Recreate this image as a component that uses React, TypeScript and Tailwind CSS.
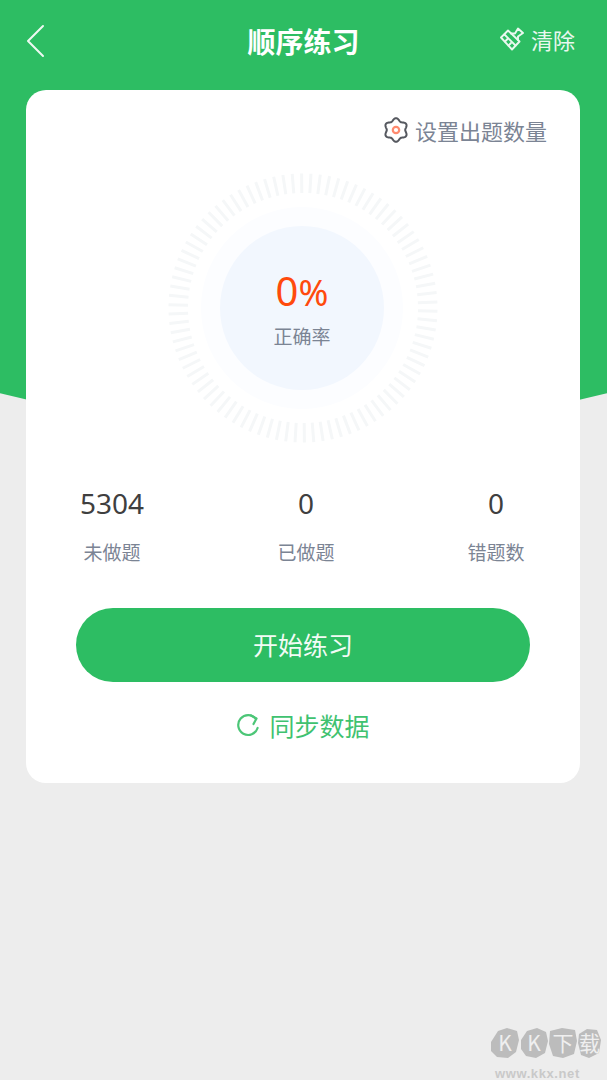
const F = "font-['Noto_Sans_CJK_SC','Noto_Sans',sans-serif]";
const LATIN = "font-['Noto_Sans','Noto_Sans_CJK_SC',sans-serif]";

function Ring() {
  const ticks = Array.from({ length: 90 }, (_, i) => i * 4 - 0.6);
  return (
    <svg width="272" height="272" viewBox="-136 -136 272 272" className="block">
      {ticks.map((a) => (
        <line key={a} x1="0" y1="-115" x2="0" y2="-134.5" stroke="#f5f7f8" strokeWidth="3" transform={`rotate(${a})`} />
      ))}
    </svg>
  );
}

function Brush() {
  return (
    <svg width="24" height="24" viewBox="0 0 24 24" fill="none" stroke="currentColor" strokeWidth="1.9" strokeLinejoin="round" strokeLinecap="round" className="block">
      <path d="M1 10.5 L8 3.5 L19.5 14.5 L12 22.5 Z" />
      <path d="M4.5 7.5 L15.5 18.5" />
      <path d="M5 14.5 L7.5 12 M8.5 18.5 L11 16" />
      <path d="M11 6.5 L15 6.5 L18 1.5 L23 6 L18 9.5 L18 13" />
    </svg>
  );
}

function gearPath() {
  const pts: string[] = [];
  for (let i = 0; i < 120; i++) {
    const t = (i / 120) * Math.PI * 2;
    const r = 10.5 - 1.3 * Math.cos(6 * t);
    pts.push(`${(12 + r * Math.cos(t)).toFixed(2)} ${(13 + r * Math.sin(t)).toFixed(2)}`);
  }
  return `M${pts.join(" L")} Z`;
}

function Gear() {
  return (
    <svg width="24" height="26" viewBox="0 0 24 26" fill="none" className="block">
      <path d={gearPath()} stroke="#55585f" strokeWidth="2" strokeLinejoin="round" />
      <circle cx="12" cy="13" r="3.2" stroke="#ff8a6e" strokeWidth="2.2" />
    </svg>
  );
}

function Sync() {
  return (
    <svg width="24" height="24" viewBox="0 0 24 24" fill="none" stroke="#4cc677" strokeWidth="2.2" strokeLinecap="round" strokeLinejoin="round" className="block translate-y-[1px]">
      <path d="M21.6 14 A9.9 9.9 0 1 1 20 5" />
      <path d="M15 1.5 L20.5 4.5 L17.5 10" />
    </svg>
  );
}

function Stat({ value, label, className }: { value: string; label: string; className?: string }) {
  return (
    <div className={`flex w-[70px] flex-col items-center ${className ?? ""}`}>
      <div className={`h-[40px] text-[28px] leading-[40px] text-[#3f3f3f] ${LATIN}`}>{value}</div>
      <div className="mt-[15px] text-[19px] leading-[28px] text-[#7b8494]">{label}</div>
    </div>
  );
}

function Watermark() {
  const blobs = [
    { d: "M1 14 L8 3 L17 0 L27 3 L29 12 L26 24 L18 30 L7 29 L1 23 Z", t: "K", x: 15 },
    { d: "M31 12 L37 3 L47 0 L56 4 L58 13 L55 25 L46 30 L36 28 L31 21 Z", t: "K", x: 44 },
    { d: "M60 3 L72 0 L85 2 L87 13 L84 26 L73 30 L63 28 L59 16 Z", t: "下", x: 73 },
    { d: "M89 6 L97 1 L107 2 L111 12 L109 25 L99 30 L91 27 L88 15 Z", t: "载", x: 99.5 },
  ];
  return (
    <div className="absolute left-[490px] top-[1028px] w-[113px]">
      <svg width="113" height="31" viewBox="0 0 113 31" className="block">
        {blobs.map((b) => (
          <g key={b.x}>
            <path d={b.d} fill="#bcbcbc" />
            <text x={b.x} y="23" textAnchor="middle" fontSize="21" fill="#efefef" fontFamily="'Noto Sans CJK SC',sans-serif">
              {b.t}
            </text>
          </g>
        ))}
      </svg>
      <div className="mt-[7px] pl-[5px] text-[13px] font-bold leading-[16px] tracking-[0.6px] text-[#c9c9c9] font-['Liberation_Sans',sans-serif]">
        www.kkx.net
      </div>
    </div>
  );
}

export default function App() {
  return (
    <div className={`relative h-[1080px] w-[607px] overflow-hidden bg-[#ededed] ${F}`}>
      <div className="absolute left-0 top-0 h-[431px] w-full bg-[#2dbd63] [clip-path:circle(1240px_at_303.5px_-809px)]" />
      <div className="relative">
        <header className="relative flex h-[90px] items-center justify-between pl-[26px] pr-[32px] pb-[8px] text-white">
          <svg width="20" height="34" viewBox="0 0 20 34" fill="none" stroke="#eef9f2" strokeWidth="2" strokeLinecap="round" strokeLinejoin="round" className="block">
            <path d="M17 2 L2 17 L17 32" />
          </svg>
          <h1 className="absolute left-0 right-0 top-[21px] text-center text-[28px] font-bold leading-[40px]">顺序练习</h1>
          <div className="-mt-[5px] flex items-center gap-[7px] text-[#e9f8ef]">
            <Brush />
            <span className="text-[22px] leading-[32px]">清除</span>
          </div>
        </header>
        <main className="mx-[26px] flex h-[693px] w-[554px] flex-col rounded-[20px] bg-white">
          <div className="flex items-center justify-end gap-[7px] pr-[33px] pt-[24px] text-[22px] leading-[32px] text-[#7b8494]">
            <Gear />
            <span>设置出题数量</span>
          </div>
          <div className="relative mt-[25.5px] flex justify-center">
            <div className="-ml-[1px]">
              <Ring />
            </div>
            <div className="absolute left-1/2 top-[136px] flex h-[202px] w-[202px] -translate-x-[102px] -translate-y-1/2 items-center justify-center rounded-full bg-[#fcfdff]">
              <div className="flex h-[164px] w-[164px] flex-col items-center justify-center rounded-full bg-[#f2f7fe]">
                <div className={`flex h-[52px] items-baseline leading-[52px] text-[#ff4a0c] ${LATIN}`}>
                  <span className="text-[40px]">0</span>
                  <span className="text-[36px]">%</span>
                </div>
                <div className="mt-[5px] text-[19px] leading-[28px] text-[#7b8494]">正确率</div>
              </div>
            </div>
          </div>
          <div className="mt-[39px] flex pl-[51px]">
            <Stat value="5304" label="未做题" />
            <Stat value="0" label="已做题" className="ml-[124px]" />
            <Stat value="0" label="错题数" className="ml-[120px]" />
          </div>
          <button className="mx-auto mt-[42.5px] flex h-[74px] w-[454px] items-center justify-center rounded-full bg-[#2dbd63] text-[25px] text-[#f2fbf5]">
            开始练习
          </button>
          <div className="mt-[25px] flex items-center justify-center gap-[9px] text-[25px] leading-[36px] text-[#3fc270]">
            <Sync />
            <span>同步数据</span>
          </div>
        </main>
      </div>
      <Watermark />
    </div>
  );
}
